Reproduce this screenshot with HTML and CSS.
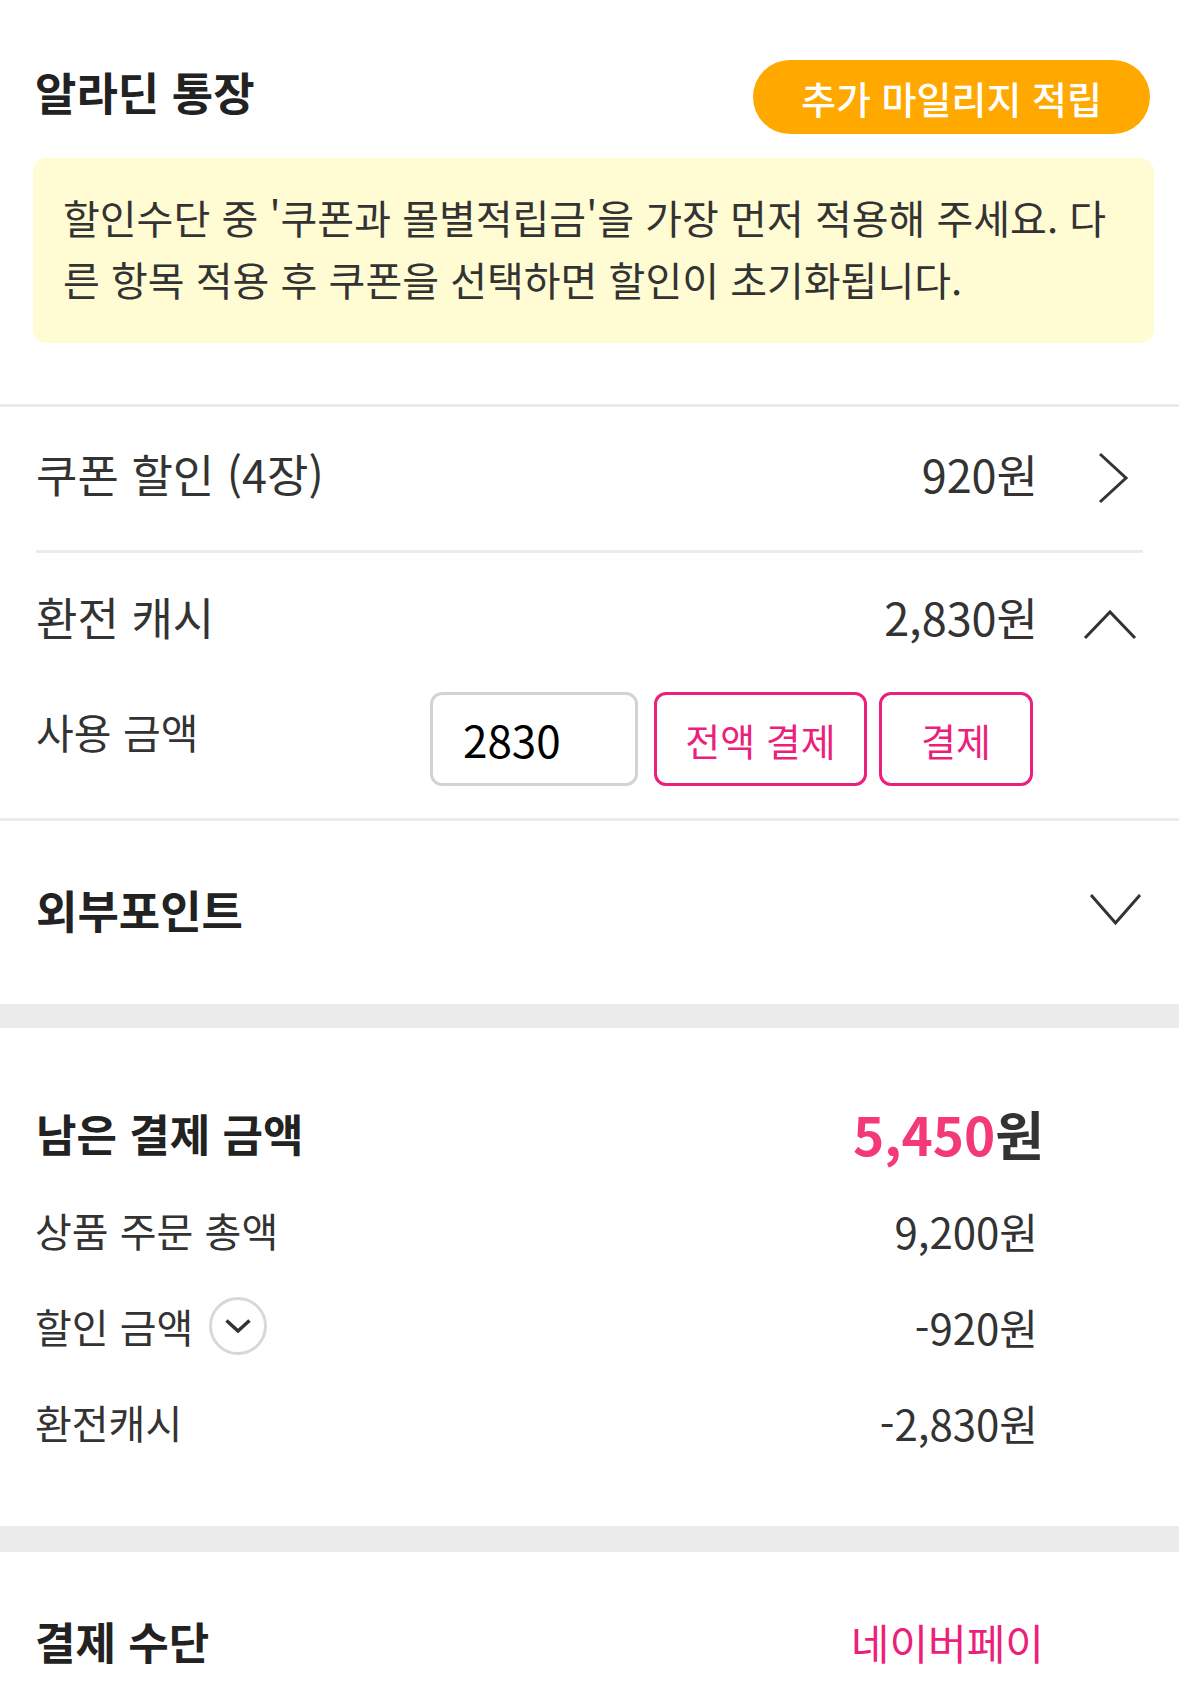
FILE: index.html
```html
<!DOCTYPE html>
<html lang="ko">
<head>
<meta charset="utf-8">
<title>결제</title>
<link rel="stylesheet" href="styles.css">
</head>
<body>
<main class="page">
  <section class="bank">
    <header class="bank-head">
      <h1 class="title">알라딘 통장</h1>
      <button class="btn-mileage" type="button">추가 마일리지 적립</button>
    </header>
    <div class="notice">할인수단 중 '쿠폰과 몰별적립금'을 가장 먼저 적용해 주세요. 다른 항목 적용 후 쿠폰을 선택하면 할인이 초기화됩니다.</div>
  </section>

  <section class="discounts">
    <div class="row row-coupon">
      <span class="label">쿠폰 할인 (4장)</span>
      <span class="value">920원</span>
      <span class="icon-cell">
        <svg class="chev" width="60" height="60" viewBox="0 0 60 60"><path d="M17 11 L43 35 L17 59" /></svg>
      </span>
    </div>
    <div class="inner-divider"></div>
    <div class="row row-cash">
      <span class="label">환전 캐시</span>
      <span class="value">2,830원</span>
      <span class="icon-cell">
        <svg class="chev" width="60" height="60" viewBox="0 0 60 60"><path d="M2 52 L27 26 L52 52" /></svg>
      </span>
    </div>
    <div class="use-row">
      <span class="label use-label">사용 금액</span>
      <input class="amount-input" type="text" value="2830">
      <button class="btn-outline btn-all" type="button">전액 결제</button>
      <button class="btn-outline btn-pay" type="button">결제</button>
    </div>
  </section>

  <section class="row row-external">
    <span class="label label-bold">외부포인트</span>
    <span class="icon-cell">
      <svg class="chev" width="60" height="60" viewBox="0 0 60 60"><path d="M8 16 L32.5 44 L57 16" /></svg>
    </span>
  </section>

  <div class="band"></div>

  <section class="summary">
    <div class="sum-head">
      <span class="label label-bold">남은 결제 금액</span>
      <span class="total"><span class="total-num">5,450</span>원</span>
    </div>
    <div class="sum-row">
      <span class="sum-label">상품 주문 총액</span>
      <span class="sum-value">9,200원</span>
    </div>
    <div class="sum-row">
      <span class="sum-label">할인 금액
        <span class="circle-btn"><svg width="26" height="14" viewBox="0 0 26 14"><path d="M1.5 1.5 L13 12 L24.5 1.5" /></svg></span>
      </span>
      <span class="sum-value">-920원</span>
    </div>
    <div class="sum-row">
      <span class="sum-label">환전캐시</span>
      <span class="sum-value">-2,830원</span>
    </div>
  </section>

  <div class="band band-2"></div>

  <section class="method">
    <span class="label label-bold">결제 수단</span>
    <span class="method-value">네이버페이</span>
  </section>
</main>
</body>
</html>
```

FILE: styles.css
```css
* { box-sizing: border-box; }

body {
  margin: 0;
  background: #fff;
  font-family: "Noto Sans CJK KR", "Noto Sans", sans-serif;
  color: #333;
}

.page {
  width: 1179px;
  overflow: hidden;
}

.bank-head {
  display: flex;
  justify-content: space-between;
  align-items: flex-start;
  padding: 60px 29px 0 35px;
}

.title {
  margin: 0;
  font-size: 45px;
  font-weight: 700;
  line-height: 64px;
  color: #222;
}

.btn-mileage {
  width: 397px;
  height: 74px;
  border: 0;
  border-radius: 37px;
  background: #FFA800;
  color: #fff;
  font-family: inherit;
  font-size: 38px;
  font-weight: 500;
  padding: 0;
}

.notice {
  margin: 24px 25px 0 33px;
  padding: 28px 30px 33px 30px;
  background: #FFFBD3;
  border-radius: 14px;
  font-size: 40px;
  line-height: 62px;
  color: #333;
}

.discounts {
  margin-top: 61px;
  border-top: 3px solid #EBEBEB;
  border-bottom: 3px solid #EBEBEB;
}

.row {
  display: flex;
  align-items: center;
  padding: 0 36px;
}

.label {
  flex: 1;
  font-size: 45px;
  color: #333;
}

.label-bold {
  font-weight: 700;
  color: #222;
}

.value {
  font-size: 45px;
  color: #333;
}

.icon-cell {
  width: 105px;
  display: flex;
  justify-content: flex-end;
}

.chev {
  overflow: visible;
}

.chev path {
  fill: none;
  stroke: #333;
  stroke-width: 3;
}

.row-coupon {
  height: 143px;
  padding-bottom: 11px;
}

.inner-divider {
  height: 3px;
  margin: 0 36px;
  background: #EBEBEB;
}

.row-cash {
  height: 126px;
}

.use-row {
  display: flex;
  align-items: center;
  padding: 13px 146px 32px 36px;
}

.use-label {
  font-size: 41px;
  margin-bottom: 16px;
}

.amount-input {
  width: 208px;
  height: 94px;
  border: 3px solid #D3D3D3;
  border-radius: 12px;
  padding: 0 0 0 30px;
  font-family: inherit;
  font-size: 44px;
  color: #000;
  background: #fff;
  outline: none;
}

.btn-outline {
  height: 94px;
  border: 3px solid #EC1F7B;
  border-radius: 12px;
  background: #fff;
  color: #EC1F7B;
  font-family: inherit;
  font-size: 38px;
  padding: 0;
}

.btn-all {
  width: 213px;
  margin-left: 16px;
}

.btn-pay {
  width: 154px;
  margin-left: 12px;
}

.row-external {
  height: 183px;
  padding-bottom: 7px;
}

.row-external .label {
  font-size: 45px;
}

.band {
  height: 24px;
  background: #EBEBEB;
}

.band-2 {
  height: 26px;
}

.summary {
  padding: 65px 0 56px;
}

.sum-head {
  display: flex;
  align-items: center;
  height: 80px;
  margin-bottom: 9px;
  padding: 0 135px 0 36px;
}

.sum-head .label {
  font-size: 44px;
}

.total {
  font-size: 53px;
  font-weight: 700;
  color: #333;
}

.total-num {
  color: #F43A76;
}

.sum-row {
  display: flex;
  align-items: center;
  justify-content: space-between;
  height: 96px;
  padding: 0 141px 0 35px;
  color: #333;
}

.sum-label {
  display: flex;
  align-items: center;
  font-size: 40px;
}

.sum-value {
  font-size: 42px;
}

.circle-btn {
  width: 58px;
  height: 58px;
  margin-left: 16px;
  border: 3px solid #D8D8D8;
  border-radius: 50%;
  display: inline-flex;
  align-items: center;
  justify-content: center;
}

.circle-btn path {
  fill: none;
  stroke: #333;
  stroke-width: 3.5;
}

.method {
  display: flex;
  align-items: center;
  height: 128px;
  padding: 50px 135px 0 35px;
}

.method .label {
  font-size: 44px;
}

.method-value {
  font-size: 42px;
  color: #EC1F7B;
}
```
